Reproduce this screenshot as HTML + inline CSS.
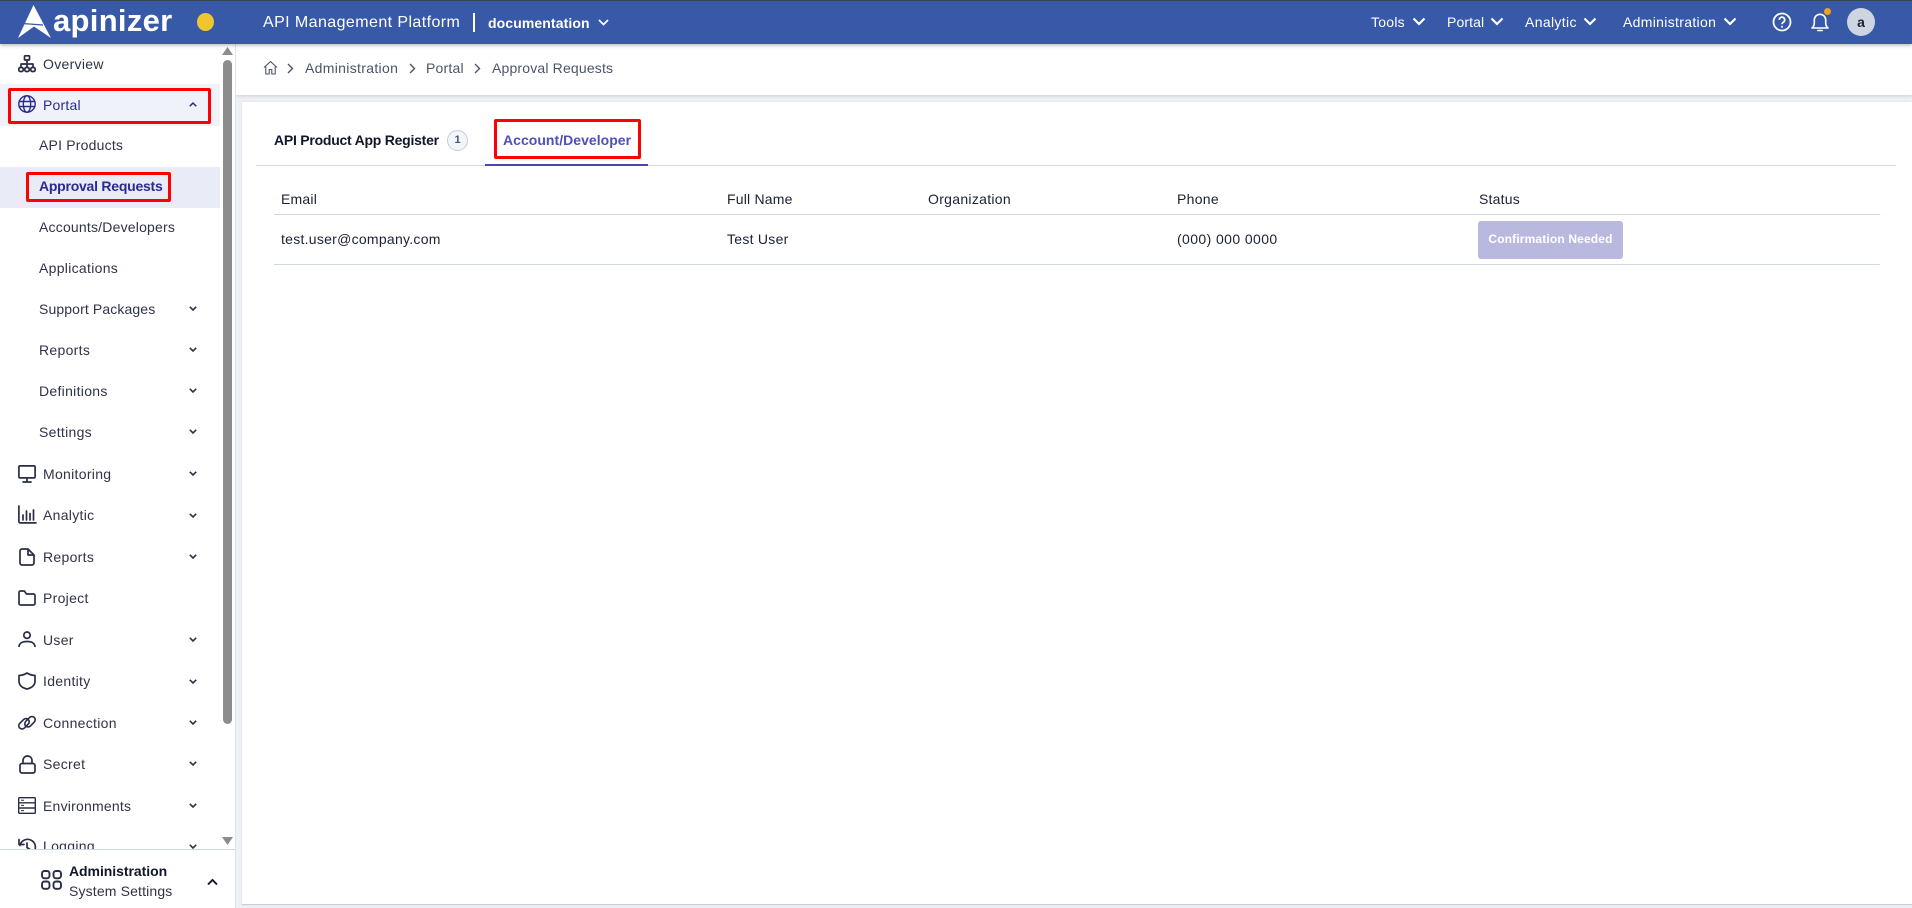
<!DOCTYPE html>
<html lang="en"><head><meta charset="utf-8"><title>Approval Requests</title>
<style>
*{box-sizing:border-box}
html,body{margin:0;padding:0;width:1912px;height:908px;overflow:hidden;background:#eef1f6;font-family:"Liberation Sans",sans-serif;color:#2a2e45;font-size:14px}
.a{position:absolute;white-space:nowrap;line-height:20px}
svg{position:absolute;overflow:visible}
.top{color:#fff;letter-spacing:.25px}
.s{letter-spacing:.3px;color:#2f3347}
.ch{fill:none;stroke:#2f3347;stroke-width:1.6}
.tc{letter-spacing:.27px;color:#1c2033}
.th{letter-spacing:.2px;color:#1c2033}
.ic{fill:none;stroke:#2a2e45;stroke-width:1.7;stroke-linecap:round;stroke-linejoin:round}
</style></head><body>
<div class="a" style="left:0;top:0;width:1912px;height:44px;background:#3858a8;border-top:1px solid #3e4352;box-shadow:0 1px 4px rgba(60,70,100,.45);z-index:3"></div>
<div style="position:absolute;z-index:4;left:0;top:0;width:1912px;height:44px">
<svg style="left:18px;top:5px" width="33" height="33" viewBox="0 0 33 33"><path fill="#fff" d="M15.500 0 33 33 16 21.500 0 33z"/><path d="M4.500 18.500 25 20" stroke="#3858a8" stroke-width="1.300" fill="none"/></svg>
<div class="a" style="left:53px;top:3px;font-size:31px;line-height:36px;font-weight:bold;color:#fff;letter-spacing:.3px">apinizer</div>
<div class="a" style="left:197px;top:13px;width:17px;height:18px;border-radius:50%;background:#f0c630"></div>
<div class="a top" style="left:263px;top:13px;font-size:16px;letter-spacing:.42px">API Management Platform</div>
<div class="a" style="left:473px;top:13px;width:1.5px;height:19px;background:#fff"></div>
<div class="a top" style="left:488px;top:13px;font-weight:bold;letter-spacing:.1px">documentation</div>
<svg style="left:598px;top:19px" width="11" height="7"><path d="M1 1l4.500 4.500L10 1" fill="none" stroke="#fff" stroke-width="1.700"/></svg>
<div class="a top" style="left:1371px;top:12px">Tools</div>
<svg style="left:1412px;top:17px" width="14" height="9"><path d="M1.500 1.500l5.500 5.500 5.500-5.500" fill="none" stroke="#fff" stroke-width="2.200"/></svg>
<div class="a top" style="left:1447px;top:12px;letter-spacing:.1px">Portal</div>
<svg style="left:1490px;top:17px" width="14" height="9"><path d="M1.500 1.500l5.500 5.500 5.500-5.500" fill="none" stroke="#fff" stroke-width="2.200"/></svg>
<div class="a top" style="left:1525px;top:12px;letter-spacing:.35px">Analytic</div>
<svg style="left:1583px;top:17px" width="14" height="9"><path d="M1.500 1.500l5.500 5.500 5.500-5.500" fill="none" stroke="#fff" stroke-width="2.200"/></svg>
<div class="a top" style="left:1623px;top:12px;letter-spacing:.32px">Administration</div>
<svg style="left:1723px;top:17px" width="14" height="9"><path d="M1.500 1.500l5.500 5.500 5.500-5.500" fill="none" stroke="#fff" stroke-width="2.200"/></svg>
<svg style="left:1772px;top:12px" width="20" height="20" viewBox="0 0 20 20"><circle cx="10" cy="10" r="8.500" fill="none" stroke="#fff" stroke-width="1.800"/><path d="M7.300 7.800a2.700 2.700 0 1 1 4.200 2.300c-1 .7-1.500 1.100-1.500 2.200" fill="none" stroke="#fff" stroke-width="1.700"/><circle cx="10" cy="14.800" r="1" fill="#fff"/></svg>
<svg style="left:1810px;top:12px" width="20" height="21" viewBox="0 0 20 21"><path d="M2 16c1.600-1.300 2.300-2.700 2.300-5V8a5.700 5.700 0 0 1 11.400 0v3c0 2.300.7 3.700 2.300 5zM7.800 18.500h4.400" fill="none" stroke="#fff" stroke-width="1.600" stroke-linejoin="round" stroke-linecap="round"/></svg>
<div class="a" style="left:1824px;top:8px;width:7px;height:7px;border-radius:50%;background:#f0a020"></div>
<div class="a" style="left:1847px;top:8px;width:28px;height:28px;border-radius:50%;background:#cdd5e1;color:#1c2033;font-weight:bold;text-align:center;line-height:29px;font-size:14px">a</div>
</div>

<!-- breadcrumb -->
<div class="a" style="left:236px;top:44px;width:1676px;height:51px;background:#fff;box-shadow:0 1px 3px rgba(120,130,150,.3)"></div>
<svg style="left:263px;top:60px" width="15" height="15" viewBox="0 0 15 15"><path d="M1 7.500 7.500 1.500 14 7.500M2.800 6.500V14h3.400V9.500h2.600V14h3.400V6.500" fill="none" stroke="#4a5568" stroke-width="1.100"/></svg>
<svg style="left:287px;top:63px" width="7" height="11"><path d="M1 1l4.500 4.500L1 10" fill="none" stroke="#4a5568" stroke-width="1.400"/></svg>
<div class="a" style="left:305px;top:58px;color:#4a5568;letter-spacing:.32px">Administration</div>
<svg style="left:409px;top:63px" width="7" height="11"><path d="M1 1l4.500 4.500L1 10" fill="none" stroke="#4a5568" stroke-width="1.400"/></svg>
<div class="a" style="left:426px;top:58px;color:#4a5568;letter-spacing:.2px">Portal</div>
<svg style="left:474px;top:63px" width="7" height="11"><path d="M1 1l4.500 4.500L1 10" fill="none" stroke="#4a5568" stroke-width="1.400"/></svg>
<div class="a" style="left:492px;top:58px;color:#4a5568;letter-spacing:.17px">Approval Requests</div>

<!-- card -->
<div class="a" style="left:242px;top:102px;width:1670px;height:803px;background:#fff;border-bottom:1px solid #c8ced8;box-shadow:0 0 2px rgba(120,130,150,.2)"></div>
<div class="a" style="left:256px;top:165px;width:1640px;height:1px;background:#cfd6e4"></div>
<div class="a" style="left:485px;top:164px;width:163px;height:2px;background:#4648b0"></div>
<div class="a" style="left:274px;top:130px;font-weight:bold;color:#12162a;letter-spacing:-.24px">API Product App Register</div>
<div class="a" style="left:447px;top:130px;width:21px;height:21px;border-radius:50%;border:1px solid #c3cde0;background:#f2f5fa;text-align:center;line-height:19px;font-size:11px;font-weight:bold;color:#4a5568">1</div>
<div class="a" style="left:503px;top:130px;font-weight:bold;color:#4f4fb8;letter-spacing:.03px">Account/Developer</div>
<div class="a" style="left:494px;top:119px;width:147px;height:40px;border:3px solid #f00;border-radius:2px"></div>

<div class="a th" style="left:281px;top:189px">Email</div>
<div class="a th" style="left:727px;top:189px">Full Name</div>
<div class="a th" style="left:928px;top:189px;letter-spacing:.3px">Organization</div>
<div class="a th" style="left:1177px;top:189px;letter-spacing:.3px">Phone</div>
<div class="a th" style="left:1479px;top:189px">Status</div>
<div class="a" style="left:274px;top:214px;width:1606px;height:1px;background:#cfd6e4"></div>
<div class="a tc" style="left:281px;top:229px">test.user@company.com</div>
<div class="a tc" style="left:727px;top:229px">Test User</div>
<div class="a tc" style="left:1177px;top:229px;letter-spacing:.4px">(000) 000 0000</div>
<div class="a" style="left:1478px;top:221px;width:145px;height:38px;background:#b9b9e0;border-radius:3px;color:#fff;font-weight:bold;font-size:12px;text-align:center;line-height:37px;letter-spacing:.15px">Confirmation Needed</div>
<div class="a" style="left:274px;top:264px;width:1606px;height:1px;background:#cfd6e4"></div>

<!-- sidebar -->
<div class="a" style="left:0;top:44px;width:236px;height:864px;background:#fff;border-right:1px solid #dfe4ec;overflow:hidden">
<div class="a" style="left:0;top:40px;width:220px;height:42px;background:#eff2f8"></div>
<div class="a" style="left:0;top:123px;width:220px;height:41px;background:#e9ebf6"></div>
<div class="a" style="left:223px;top:16px;width:9px;height:664px;border-radius:5px;background:#8c8c8c"></div>
<svg style="left:222px;top:3px" width="11" height="8"><path d="M5.500 0 11 8H0z" fill="#8c8c8c"/></svg>
<svg style="left:222px;top:793px" width="11" height="8"><path d="M0 0h11L5.500 8z" fill="#8c8c8c"/></svg>

<div class="a s" style="left:43px;top:10px">Overview</div>
<div class="a s" style="left:43px;top:51px;color:#2b2b8c;letter-spacing:.2px">Portal</div>
<div class="a s" style="left:39px;top:91px;letter-spacing:.2px">API Products</div>
<div class="a s" style="left:39px;top:132px;font-weight:bold;color:#2a2a90;letter-spacing:-.24px">Approval Requests</div>
<div class="a s" style="left:39px;top:173px;letter-spacing:.2px">Accounts/Developers</div>
<div class="a s" style="left:39px;top:214px">Applications</div>
<div class="a s" style="left:39px;top:255px;letter-spacing:.12px">Support Packages</div>
<div class="a s" style="left:39px;top:296px">Reports</div>
<div class="a s" style="left:39px;top:337px">Definitions</div>
<div class="a s" style="left:39px;top:378px">Settings</div>
<div class="a s" style="left:43px;top:420px">Monitoring</div>
<div class="a s" style="left:43px;top:461px">Analytic</div>
<div class="a s" style="left:43px;top:503px">Reports</div>
<div class="a s" style="left:43px;top:544px">Project</div>
<div class="a s" style="left:43px;top:586px">User</div>
<div class="a s" style="left:43px;top:627px">Identity</div>
<div class="a s" style="left:43px;top:669px">Connection</div>
<div class="a s" style="left:43px;top:710px">Secret</div>
<div class="a s" style="left:43px;top:752px;letter-spacing:.22px">Environments</div>
<div class="a s" style="left:43px;top:792px">Logging</div>

<!-- chevrons -->
<svg style="left:189px;top:58px" width="8" height="5"><path d="M.8 4.200 4 1l3.200 3.200" fill="none" stroke="#2b2b8c" stroke-width="1.500"/></svg>
<svg style="left:189px;top:262px" width="8" height="5"><path class="ch" d="M.8.8 4 4 7.200.8"/></svg>
<svg style="left:189px;top:303px" width="8" height="5"><path class="ch" d="M.8.8 4 4 7.200.8"/></svg>
<svg style="left:189px;top:344px" width="8" height="5"><path class="ch" d="M.8.8 4 4 7.200.8"/></svg>
<svg style="left:189px;top:385px" width="8" height="5"><path class="ch" d="M.8.8 4 4 7.200.8"/></svg>
<svg style="left:189px;top:427px" width="8" height="5"><path class="ch" d="M.8.8 4 4 7.200.8"/></svg>
<svg style="left:189px;top:469px" width="8" height="5"><path class="ch" d="M.8.8 4 4 7.200.8"/></svg>
<svg style="left:189px;top:510px" width="8" height="5"><path class="ch" d="M.8.8 4 4 7.200.8"/></svg>
<svg style="left:189px;top:593px" width="8" height="5"><path class="ch" d="M.8.8 4 4 7.200.8"/></svg>
<svg style="left:189px;top:635px" width="8" height="5"><path class="ch" d="M.8.8 4 4 7.200.8"/></svg>
<svg style="left:189px;top:676px" width="8" height="5"><path class="ch" d="M.8.8 4 4 7.200.8"/></svg>
<svg style="left:189px;top:717px" width="8" height="5"><path class="ch" d="M.8.8 4 4 7.200.8"/></svg>
<svg style="left:189px;top:759px" width="8" height="5"><path class="ch" d="M.8.8 4 4 7.200.8"/></svg>
<svg style="left:189px;top:800px" width="8" height="5"><path class="ch" d="M.8.8 4 4 7.200.8"/></svg>

<!-- icons -->
<svg style="left:18px;top:11px" width="18" height="18" viewBox="0 0 18 18"><g class="ic" stroke-width="1.300"><rect x="6.500" y=".8" width="5" height="4.200" rx=".6"/><path d="M9 5v4M3 12V9h12v3M9 9v3"/><rect x=".8" y="12.500" width="4.400" height="4" rx="1.500"/><rect x="6.800" y="12.500" width="4.400" height="4" rx="1.500"/><rect x="12.800" y="12.500" width="4.400" height="4" rx="1.500"/></g></svg>
<svg style="left:18px;top:51px" width="18" height="18" viewBox="0 0 18 18"><g fill="none" stroke="#2b2b8c" stroke-width="1.400"><circle cx="9" cy="9" r="8.200"/><ellipse cx="9" cy="9" rx="3.700" ry="8.200"/><path d="M1.200 6.500h15.600M1.200 11.500h15.600"/></g></svg>
<svg style="left:18px;top:421px" width="18" height="18" viewBox="0 0 18 18"><g class="ic"><rect x=".9" y=".9" width="16.200" height="12" rx="1.200"/><path d="M9 13v3.500M5 17h8"/></g></svg>
<svg style="left:18px;top:462px" width="18" height="18" viewBox="0 0 18 18"><path class="ic" stroke-linecap="butt" d="M.9 0v15.500a1.400 1.400 0 0 0 1.400 1.400H18M5 9v5M8.500 5v9M12 7.500V14M15.500 4v10"/></svg>
<svg style="left:19px;top:504px" width="16" height="18" viewBox="0 0 16 18"><path class="ic" d="M1 3a2 2 0 0 1 2-2h6l6 6v8a2 2 0 0 1-2 2H3a2 2 0 0 1-2-2zM9 1v6h6"/></svg>
<svg style="left:18px;top:546px" width="18" height="16" viewBox="0 0 18 16"><path class="ic" d="M1 2.500A1.500 1.500 0 0 1 2.500 1h3.800l2.200 3h7A1.500 1.500 0 0 1 17 5.500v8a1.500 1.500 0 0 1-1.500 1.500h-13A1.500 1.500 0 0 1 1 13.500z"/></svg>
<svg style="left:18px;top:587px" width="18" height="17" viewBox="0 0 18 17"><g class="ic"><circle cx="9" cy="4.200" r="3.200"/><path d="M1 16c0-3.500 3-5.500 8-5.500s8 2 8 5.500" stroke-linecap="butt"/></g></svg>
<svg style="left:18px;top:628px" width="18" height="18" viewBox="0 0 18 18"><path class="ic" d="M9 1c2.500 1.600 5 2.300 8 2.500V9c0 4-3 6.800-8 8-5-1.200-8-4-8-8V3.500c3-.2 5.500-.9 8-2.500z"/></svg>
<svg style="left:18px;top:671px" width="18" height="16" viewBox="0 0 18 16"><g fill="none" stroke="#2a2e45" stroke-width="1.600"><rect x="0" y="5.500" width="12" height="6.500" rx="3.200" transform="rotate(-45 6 8.750)"/><rect x="6" y="3.500" width="12" height="6.500" rx="3.200" transform="rotate(-45 12 6.750)"/></g></svg>
<svg style="left:19px;top:711px" width="17" height="19" viewBox="0 0 17 19"><g class="ic"><rect x="1" y="8.500" width="15" height="9.500" rx="2"/><path d="M4 8.500V5.500a4.500 4.500 0 0 1 9 0v3"/></g></svg>
<svg style="left:18px;top:753px" width="18" height="17" viewBox="0 0 18 17"><g fill="none" stroke="#2a2e45" stroke-width="1.400"><rect x=".7" y=".7" width="16.600" height="15.600" rx=".8"/><path d="M.7 5.800h16.600M.7 11h16.600"/><path d="M3 3.200h3M3 8.400h3M3 13.600h3" stroke-width="1"/></g></svg>
<svg style="left:18px;top:794px" width="18" height="18" viewBox="0 0 18 18"><path class="ic" d="M2 7.500A7.800 7.800 0 1 1 3.500 14M1 1.500v5h5M9 5v4.500l3 2"/></svg>

<!-- footer -->
<div class="a" style="left:0;top:805px;width:235px;height:59px;background:#fff;border-top:1px solid #cfd6e2"></div>
<svg style="left:41px;top:826px" width="21" height="20" viewBox="0 0 21 20"><g fill="none" stroke="#2a2e45" stroke-width="1.900"><rect x="1" y="1" width="7.500" height="7.300" rx="2.500"/><rect x="12.500" y="1" width="7.500" height="7.300" rx="2.500"/><rect x="1" y="11.500" width="7.500" height="7.300" rx="2.500"/><rect x="12.500" y="11.500" width="7.500" height="7.300" rx="2.500"/></g></svg>
<div class="a" style="left:69px;top:817px;font-weight:bold;color:#12162a;letter-spacing:-.05px">Administration</div>
<div class="a s" style="left:69px;top:837px;letter-spacing:.15px">System Settings</div>
<svg style="left:207px;top:834px" width="11" height="8"><path d="M1 6.500l4.500-4.500L10 6.500" fill="none" stroke="#12162a" stroke-width="1.900"/></svg>
</div>

<!-- red highlight boxes -->
<div class="a" style="left:8px;top:88px;width:203px;height:36px;border:3px solid #f00;border-radius:2px;z-index:5"></div>
<div class="a" style="left:26px;top:172px;width:145px;height:30px;border:3px solid #f00;border-radius:2px;z-index:5"></div>
</body></html>
